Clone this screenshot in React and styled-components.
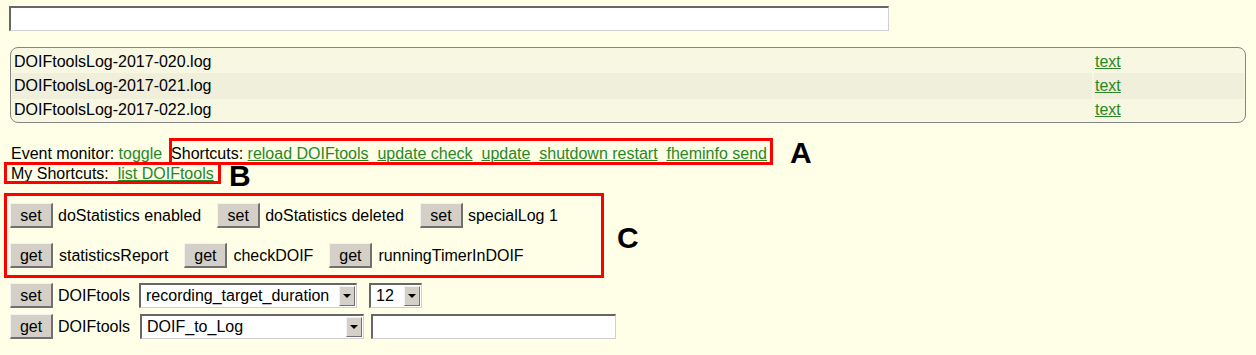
import React from 'react';
import styled, { createGlobalStyle } from 'styled-components';

const GlobalStyle = createGlobalStyle`
  html, body {
    margin: 0;
    padding: 0;
    background: #ffffe7;
  }
  body {
    font-family: "Liberation Sans", Arial, sans-serif;
    font-size: 16px;
    color: #000;
  }
`;

const logs = [
  'DOIFtoolsLog-2017-020.log',
  'DOIFtoolsLog-2017-021.log',
  'DOIFtoolsLog-2017-022.log',
];

const shortcuts = ['reload DOIFtools', 'update check', 'update', 'shutdown restart', 'fheminfo send'];

const quickSets = [
  { kind: 'set', label: 'doStatistics enabled' },
  { kind: 'set', label: 'doStatistics deleted' },
  { kind: 'set', label: 'specialLog 1' },
];

const quickGets = [
  { kind: 'get', label: 'statisticsReport' },
  { kind: 'get', label: 'checkDOIF' },
  { kind: 'get', label: 'runningTimerInDOIF' },
];

function App() {
  return (
    <Page>
      <GlobalStyle />
      <TopInput type="text" />

      <LogTable>
        {logs.map((name, i) => (
          <LogRow key={name}>
            <LogCell $odd={i % 2 === 1} $pad="2px">{name}</LogCell>
            <LogCell $odd={i % 2 === 1} $pad="1px">
              <Link href="#">text</Link>
            </LogCell>
          </LogRow>
        ))}
      </LogTable>

      <EventLine>
        {'Event monitor: '}
        <Link href="#" $plain>toggle</Link>
        {'  Shortcuts: '}
        {shortcuts.map((s, i) => (
          <React.Fragment key={s}>
            <Link href="#">{s}</Link>
            {i < shortcuts.length - 1 ? '  ' : ''}
          </React.Fragment>
        ))}
      </EventLine>
      <TextLine>
        {'My Shortcuts:  '}
        <Link href="#">list DOIFtools</Link>
      </TextLine>

      <Commands>
        <CmdRow>
          {quickSets.map((c) => (
            <CmdItem key={c.label}>
              <Button>{c.kind}</Button>
              <span>{c.label}</span>
            </CmdItem>
          ))}
        </CmdRow>
        <CmdRow>
          {quickGets.map((c) => (
            <CmdItem key={c.label} $gap="6px">
              <Button>{c.kind}</Button>
              <span>{c.label}</span>
            </CmdItem>
          ))}
        </CmdRow>
      </Commands>

      <Setters>
        <CmdRow>
          <Button>set</Button>
          <DevName>DOIFtools</DevName>
          <FakeSelect $w="218px" $ml="9px">
            <SelectValue>recording_target_duration</SelectValue>
            <DropButton />
          </FakeSelect>
          <FakeSelect $w="53px" $ml="12px">
            <SelectValue>12</SelectValue>
            <DropButton />
          </FakeSelect>
        </CmdRow>
        <CmdRow>
          <Button>get</Button>
          <DevName>DOIFtools</DevName>
          <FakeSelect $w="224px" $ml="10px">
            <SelectValue>DOIF_to_Log</SelectValue>
            <DropButton />
          </FakeSelect>
          <ValueInput type="text" />
        </CmdRow>
      </Setters>

      {/* annotation marks drawn over the page */}
      <Mark $left="169px" $top="138px" $w="604px" $h="27px" />
      <Mark $left="4px" $top="162px" $w="217px" $h="22px" />
      <Mark $left="4px" $top="193px" $w="600px" $h="85px" />
      <Letter $left="790px" $top="138px">A</Letter>
      <Letter $left="229px" $top="161px">B</Letter>
      <Letter $left="617px" $top="223px">C</Letter>
    </Page>
  );
}

export default App;

const Page = styled.div`
  position: relative;
  height: 355px;
  box-sizing: border-box;
  padding-top: 6px;
  overflow: hidden;
`;

const TopInput = styled.input`
  display: block;
  margin: 0 0 0 9px;
  width: 880px;
  height: 25px;
  box-sizing: border-box;
  border-style: solid;
  border-width: 2px 1px 1px 2px;
  border-color: #666 #d0d0d0 #d0d0d0 #666;
  background: #fff;
  padding: 0 3px;
  font: inherit;
  outline: none;
`;

const LogTable = styled.div`
  margin: 16px 10px 0;
  border: 1px solid #858585;
  border-radius: 8px;
  padding: 1px;
  background: #f7f7e2;
`;

const LogRow = styled.div`
  display: grid;
  grid-template-columns: 1fr 150px;
  column-gap: 2px;
  height: 24px;
`;

const LogCell = styled.div`
  padding-left: ${(p) => p.$pad};
  line-height: 26px;
  background: ${(p) => (p.$odd ? '#efefdb' : 'transparent')};
  white-space: nowrap;
`;

const Link = styled.a`
  color: #278727;
  text-decoration: ${(p) => (p.$plain ? 'none' : 'underline')};
`;

const TextLine = styled.div`
  padding-left: 11px;
  line-height: 20px;
  white-space: pre;
`;

const EventLine = styled(TextLine)`
  margin-top: 21px;
`;

const Commands = styled.div`
  margin-top: 19px;
  padding-left: 10px;
  display: flex;
  flex-direction: column;
  gap: 15px;
`;

const Setters = styled.div`
  margin-top: 15px;
  padding-left: 10px;
  display: flex;
  flex-direction: column;
  gap: 6px;
`;

const CmdRow = styled.div`
  display: flex;
  align-items: center;
  height: 25px;
  white-space: nowrap;
`;

const CmdItem = styled.div`
  display: flex;
  align-items: center;
  gap: ${(p) => p.$gap || '5px'};
  margin-right: 16px;
`;

const Button = styled.button`
  width: 43px;
  height: 25px;
  box-sizing: border-box;
  padding: 1px 0 0;
  background: #d4d0c8;
  border-style: solid;
  border-width: 1px 2px 2px 1px;
  border-color: #f2f2f2 #707070 #707070 #f2f2f2;
  font: inherit;
  color: #000;
`;

const DevName = styled.span`
  margin-left: 5px;
`;

const FakeSelect = styled.div`
  display: flex;
  align-items: stretch;
  width: ${(p) => p.$w};
  height: 25px;
  margin-left: ${(p) => p.$ml};
  box-sizing: border-box;
  border-style: solid;
  border-width: 2px 1px 1px 2px;
  border-color: #666 #d0d0d0 #d0d0d0 #666;
  background: #fff;
`;

const SelectValue = styled.span`
  flex: 1;
  padding-left: 5px;
  line-height: 22px;
  overflow: hidden;
`;

const DropButton = styled.span`
  width: 16px;
  margin: 1px;
  box-sizing: border-box;
  background: #d4d0c8;
  border-style: solid;
  border-width: 1px;
  border-color: #f2f2f2 #707070 #707070 #f2f2f2;
  display: flex;
  align-items: center;
  justify-content: center;

  &::after {
    content: '';
    width: 0;
    height: 0;
    border-left: 4px solid transparent;
    border-right: 4px solid transparent;
    border-top: 4px solid #000;
  }
`;

const ValueInput = styled.input`
  margin-left: 7px;
  width: 245px;
  height: 25px;
  box-sizing: border-box;
  border-style: solid;
  border-width: 2px 1px 1px 2px;
  border-color: #666 #d0d0d0 #d0d0d0 #666;
  background: #fff;
  font: inherit;
  padding: 0 3px;
  outline: none;
`;

const Mark = styled.div`
  position: absolute;
  left: ${(p) => p.$left};
  top: ${(p) => p.$top};
  width: ${(p) => p.$w};
  height: ${(p) => p.$h};
  box-sizing: border-box;
  border: 3px solid #ff0000;
  pointer-events: none;
`;

const Letter = styled.span`
  position: absolute;
  left: ${(p) => p.$left};
  top: ${(p) => p.$top};
  font-family: "Liberation Sans", Arial, sans-serif;
  font-weight: bold;
  font-size: 30px;
  line-height: 30px;
  color: #000;
`;
